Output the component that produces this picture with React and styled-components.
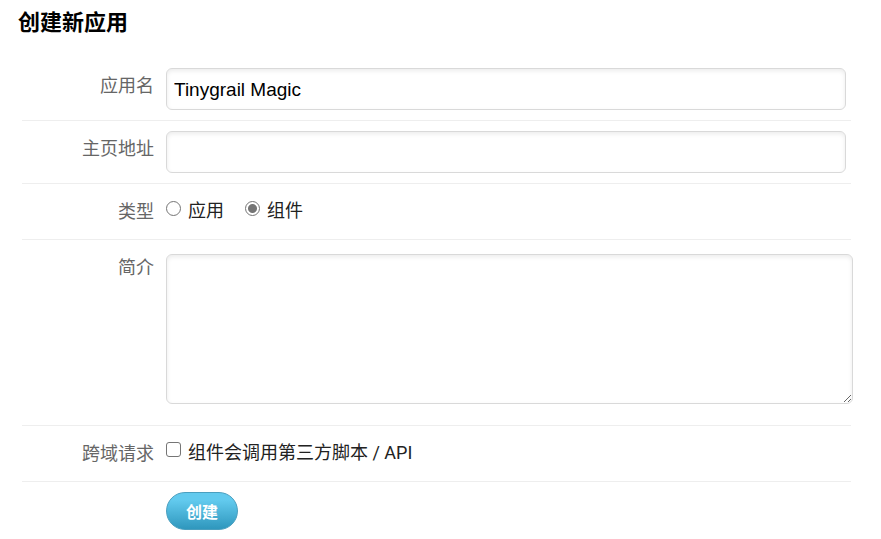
import React from "react";
import styled, { createGlobalStyle, css } from "styled-components";

const GlobalStyle = createGlobalStyle`
  *, *::before, *::after { box-sizing: border-box; }
  body {
    margin: 0;
    background: #fff;
    color: #222;
    font-family: "Liberation Sans", "Noto Sans CJK SC", sans-serif;
    font-size: 18px;
    line-height: 24px;
  }
`;

const Page = styled.main`
  padding: 8px 30px 8px 18px;
`;

const Title = styled.h1`
  margin: 0 0 20px;
  color: #000;
  font-size: 22px;
  font-weight: 700;
  line-height: 30px;
`;

const Form = styled.form`
  margin-left: 4px;
`;

const Row = styled.div`
  display: grid;
  grid-template-columns: 132px minmax(0, 1fr);
  column-gap: 12px;
  padding: ${(p) => (p.$roomy ? "14px 0 21px" : "10px 0")};
  border-bottom: ${(p) => (p.$last ? "0" : "1px solid #eee")};
`;

const labelStyle = css`
  padding-top: ${(p) => (p.$raised ? "2px" : "6px")};
  color: #666;
  text-align: right;
`;

const Label = styled.label`
  ${labelStyle}
`;

const GroupLabel = styled.span`
  ${labelStyle}
`;

const fieldStyle = css`
  display: block;
  border: 1px solid #d9d9d9;
  border-radius: 6px;
  background: #fff;
  box-shadow: inset 0 2px 4px rgba(0, 0, 0, 0.08);
  color: #000;
  font-family: inherit;
  font-size: 19px;
  outline: 0;
`;

const TextInput = styled.input`
  ${fieldStyle}
  width: calc(100% - 5px);
  height: 42px;
  padding: 1px 7px 0;
`;

const TextArea = styled.textarea`
  ${fieldStyle}
  width: calc(100% + 2px);
  height: 150px;
  padding: 7px;
  resize: both;
`;

const Options = styled.div`
  display: flex;
  gap: 21px;
  padding: 5px 0 6px;
`;

const Option = styled.label`
  display: flex;
  align-items: flex-start;
  gap: 7px;
  color: #222;
  font-family: Roboto, "Noto Sans CJK SC", sans-serif;
`;

const Choice = styled.input`
  flex: none;
  appearance: none;
  width: 15px;
  height: 15px;
  margin: 2px 0 0;
  border: 1px solid #757575;
  background: #fff;
`;

const RadioChoice = styled(Choice)`
  border-radius: 50%;

  &:checked {
    background: radial-gradient(circle, #757575 4px, #fff 5px);
  }
`;

const CheckChoice = styled(Choice)`
  margin-top: 1px;
  border-radius: 3px;

  &:checked {
    background: #757575;
  }
`;

const SubmitButton = styled.button`
  justify-self: start;
  grid-column: 2;
  height: 38px;
  padding: 0 19px;
  border: 1px solid #4a9fbf;
  border-radius: 19px;
  background: linear-gradient(#62caee 20%, #2f97bd);
  color: #fff;
  font-family: inherit;
  font-size: 16px;
  font-weight: 700;
  cursor: pointer;
`;

export default function App() {
  return (
    <>
      <GlobalStyle />
      <Page>
        <Title>创建新应用</Title>
        <Form onSubmit={(e) => e.preventDefault()}>
          <Row>
            <Label htmlFor="app-name">应用名</Label>
            <TextInput id="app-name" type="text" defaultValue="Tinygrail Magic" />
          </Row>
          <Row>
            <Label htmlFor="app-url">主页地址</Label>
            <TextInput id="app-url" type="text" />
          </Row>
          <Row role="radiogroup" aria-labelledby="app-type">
            <GroupLabel id="app-type">类型</GroupLabel>
            <Options>
              <Option>
                <RadioChoice type="radio" name="type" value="app" />
                应用
              </Option>
              <Option>
                <RadioChoice type="radio" name="type" value="gadget" defaultChecked />
                组件
              </Option>
            </Options>
          </Row>
          <Row $roomy>
            <Label htmlFor="app-desc" $raised>简介</Label>
            <TextArea id="app-desc" />
          </Row>
          <Row role="group" aria-labelledby="app-cors">
            <GroupLabel id="app-cors">跨域请求</GroupLabel>
            <Options>
              <Option>
                <CheckChoice type="checkbox" name="cors" />
                组件会调用第三方脚本 / API
              </Option>
            </Options>
          </Row>
          <Row $last>
            <SubmitButton type="submit">创建</SubmitButton>
          </Row>
        </Form>
      </Page>
    </>
  );
}
